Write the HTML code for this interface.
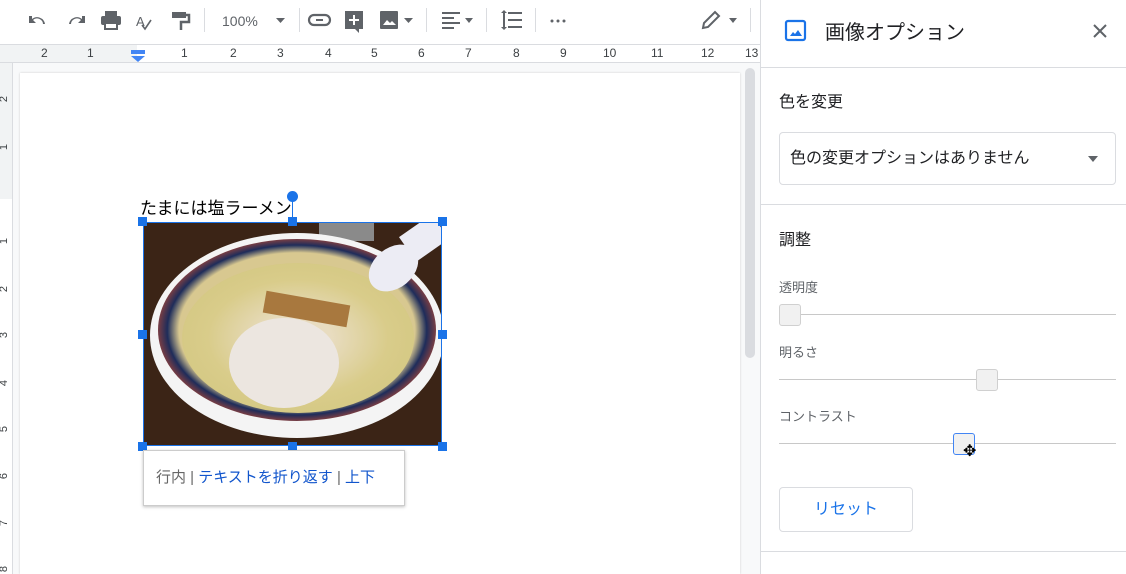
<!DOCTYPE html>
<html><head><meta charset="utf-8"><style>
*{box-sizing:border-box;margin:0;padding:0}
body{width:1126px;height:574px;overflow:hidden;position:relative;background:#f8f9fa;font-family:"Liberation Sans","Noto Sans CJK JP",sans-serif;color:#202124}
.abs{position:absolute}
#tb{left:0;top:0;width:760px;height:45px;background:#fff;border-bottom:1px solid #dadce0}
.sep{position:absolute;top:8px;width:1px;height:24px;background:#dadce0}
#ruler{left:0;top:45px;width:760px;height:18px;background:#fff;border-bottom:1px solid #dadce0;font-size:12px;color:#3c4043}
#ruler span{position:absolute;top:1px}
#lr{left:0;top:63px;width:13px;height:511px;background:#fff;border-right:1px solid #dadce0;font-size:11px;color:#3c4043}
#lr span{position:absolute;left:1px;transform:rotate(-90deg)}
#page{left:20px;top:73px;width:720px;height:501px;background:#fff;box-shadow:0 0 2px #ccc}
#sb{left:745px;top:68px;width:10px;height:290px;background:#dadce0;border-radius:5px}
#panel{left:760px;top:0;width:366px;height:574px;background:#fff;border-left:1px solid #dadce0}
.div{position:absolute;left:0;width:366px;height:1px;background:#dadce0}
.track{position:absolute;left:18px;width:337px;height:1px;background:#c8c8c8}
.thumb{position:absolute;width:22px;height:22px;background:#f1f1f1;border:1px solid #d0d0d0;border-radius:3px}
.lbl{position:absolute;left:18px;font-size:13px;color:#5f6368}
.h{position:absolute;width:9px;height:9px;background:#1a73e8}
</style></head><body>
<div id="tb" class="abs">
<svg width="760" height="45" style="position:absolute;left:0;top:0" fill="#5f6368">
<path d="M32 16 l-3 0 0 7 7 0 -3-3 a6 6 0 0 1 10 4 l2 0 a8 8 0 0 0 -13 -5z" />
<path d="M82 16 l3 0 0 7 -7 0 3-3 a6 6 0 0 0 -10 4 l-2 0 a8 8 0 0 1 13 -5z"/>
<rect x="101" y="16" width="20" height="9" rx="2"/><rect x="105" y="11" width="12" height="5"/><rect x="105" y="23" width="12" height="6" fill="#fff" stroke="#5f6368" stroke-width="2"/>
<text x="136" y="26" font-size="13" font-family="Liberation Sans">A</text><path d="M142 25 l3 4 6 -9" stroke="#5f6368" stroke-width="1.6" fill="none"/>
<rect x="172" y="12" width="14" height="6"/><path d="M186 15 h3 v7 h-8 v8" stroke="#5f6368" stroke-width="2.5" fill="none"/>
<text x="222" y="26" font-size="14" font-family="Liberation Sans">100%</text><path d="M276 18 l9 0 -4.5 5z"/>
<rect x="309" y="15" width="21" height="10" rx="5" fill="none" stroke="#5f6368" stroke-width="2.2"/><rect x="316" y="19" width="7" height="2" />
<path d="M345 11 h18 v18 h-4 v4 l-4 -4 h-10z"/><path d="M353 15 h2 v4 h4 v2 h-4 v4 h-2 v-4 h-4 v-2 h4z" fill="#fff"/>
<rect x="380" y="11" width="18" height="18" rx="1"/><path d="M383 25 l4-5 3 3 2-2 4 4z" fill="#fff"/><path d="M404 18 l9 0 -4.5 5z"/>
<rect x="442" y="12" width="18" height="2"/><rect x="442" y="17" width="12" height="2"/><rect x="442" y="22" width="18" height="2"/><rect x="442" y="27" width="12" height="2"/><path d="M465 18 l8 0 -4 5z"/>
<rect x="508" y="12" width="14" height="2"/><rect x="508" y="19" width="14" height="2"/><rect x="508" y="26" width="14" height="2"/><path d="M501 13 l3-3 3 3 h-2 v14 h2 l-3 3 -3-3 h2 v-14z"/>
<circle cx="552" cy="21" r="1.5"/><circle cx="558" cy="21" r="1.5"/><circle cx="564" cy="21" r="1.5"/>
<path d="M703 28 l1-5 11-11 4 4 -11 11z" fill="none" stroke="#5f6368" stroke-width="2"/><path d="M729 18 l8 0 -4 5z"/>
</svg>
<div class="sep" style="left:204px"></div><div class="sep" style="left:299px"></div><div class="sep" style="left:426px"></div><div class="sep" style="left:486px"></div><div class="sep" style="left:535px"></div><div class="sep" style="left:750px"></div>
</div>
<div id="ruler" class="abs">
<div class="abs" style="left:0;top:0;width:137px;height:17px;background:#f1f3f4"></div>
<span style="left:41px">2</span><span style="left:87px">1</span><span style="left:181px">1</span><span style="left:230px">2</span><span style="left:277px">3</span><span style="left:325px">4</span><span style="left:371px">5</span><span style="left:418px">6</span><span style="left:465px">7</span><span style="left:513px">8</span><span style="left:560px">9</span><span style="left:603px">10</span><span style="left:651px">11</span><span style="left:701px">12</span><span style="left:745px">13</span>
<svg class="abs" style="left:129px;top:5px" width="18" height="12"><rect x="2" y="0" width="14" height="4" fill="#4285f4"/><path d="M2 6 h14 l-7 6z" fill="#4285f4"/></svg>
</div>
<div id="lr" class="abs">
<div class="abs" style="left:0;top:0;width:12px;height:136px;background:#f1f3f4"></div>
<span style="top:30px">2</span><span style="top:78px">1</span><span style="top:172px">1</span><span style="top:220px">2</span><span style="top:266px">3</span><span style="top:314px">4</span><span style="top:360px">5</span><span style="top:407px">6</span><span style="top:454px">7</span><span style="top:500px">8</span>
</div>
<div id="page" class="abs"></div>
<div id="sb" class="abs"></div>
<div class="abs" style="left:140px;top:194px;font-size:17px;color:#000">たまには塩ラーメン</div>
<div class="abs" style="left:143px;top:222px;width:299px;height:224px;background:#3b2416;overflow:hidden;border:1px solid #1a73e8">
<div class="abs" style="left:175px;top:0;width:55px;height:18px;background:#8a8a8a"></div>
<div class="abs" style="left:6px;top:10px;width:294px;height:205px;border-radius:50%;background:#f4f4f4"></div>
<div class="abs" style="left:14px;top:16px;width:278px;height:182px;border-radius:50%;background:radial-gradient(ellipse,#d8c890 60%,#1e2c5a 66%,#b84a34 74%,#1e2c5a 84%)"></div>
<div class="abs" style="left:38px;top:40px;width:232px;height:150px;border-radius:50%;background:radial-gradient(ellipse,#e8dcc0 20%,#d9cc8a 55%,#cfc47c 100%)"></div>
<div class="abs" style="left:85px;top:95px;width:110px;height:90px;border-radius:50%;background:#ece6e0"></div>
<div class="abs" style="left:120px;top:75px;width:85px;height:22px;background:#a8783e;transform:rotate(10deg)"></div>
<div class="abs" style="left:222px;top:25px;width:55px;height:40px;border-radius:50%;background:#ececf4;transform:rotate(-40deg)"></div>
<div class="abs" style="left:260px;top:0;width:40px;height:30px;background:#ececf4;transform:rotate(-35deg)"></div>
</div>
<div class="h" style="left:138px;top:217px"></div><div class="h" style="left:288px;top:217px"></div><div class="h" style="left:438px;top:217px"></div>
<div class="h" style="left:138px;top:330px"></div><div class="h" style="left:438px;top:330px"></div>
<div class="h" style="left:138px;top:442px"></div><div class="h" style="left:288px;top:442px"></div><div class="h" style="left:438px;top:442px"></div>
<div class="abs" style="left:287px;top:191px;width:11px;height:11px;border-radius:50%;background:#1a73e8"></div>
<div class="abs" style="left:292px;top:200px;width:1px;height:17px;background:#1a73e8"></div>
<div class="abs" style="left:143px;top:450px;width:262px;height:56px;background:#fff;border:1px solid #ccc;box-shadow:0 1px 3px rgba(0,0,0,.25);font-size:15px;line-height:54px;padding-left:12px;color:#1155cc"><span style="color:#666">行内 | </span>テキストを折り返す<span style="color:#666"> | </span>上下</div>
<div id="panel" class="abs">
<svg class="abs" style="left:23px;top:19px" width="24" height="24"><rect x="2" y="2" width="19" height="19" rx="2" fill="none" stroke="#1a73e8" stroke-width="2.2"/><path d="M6 17 l3-4 2 2 3-4 4 6z" fill="#1a73e8"/></svg>
<div class="abs" style="left:64px;top:16px;font-size:20px">画像オプション</div>
<svg class="abs" style="left:331px;top:23px" width="16" height="16"><path d="M2 2 L14 14 M14 2 L2 14" stroke="#5f6368" stroke-width="2"/></svg>
<div class="div" style="top:67px"></div>
<div class="abs" style="left:18px;top:88px;font-size:16px">色を変更</div>
<div class="abs" style="left:18px;top:132px;width:337px;height:53px;border:1px solid #dadce0;border-radius:4px;font-size:16px;line-height:51px;padding-left:10px">色の変更オプションはありません
<svg class="abs" style="left:307px;top:22px" width="12" height="8"><path d="M1 1h10l-5 6z" fill="#5f6368"/></svg></div>
<div class="div" style="top:204px"></div>
<div class="abs" style="left:18px;top:226px;font-size:16px">調整</div>
<div class="lbl" style="top:277px">透明度</div>
<div class="track" style="top:314px"></div><div class="thumb" style="left:18px;top:304px"></div>
<div class="lbl" style="top:342px">明るさ</div>
<div class="track" style="top:379px"></div><div class="thumb" style="left:215px;top:369px"></div>
<div class="lbl" style="top:406px">コントラスト</div>
<div class="track" style="top:443px"></div><div class="thumb" style="left:192px;top:433px;border-color:#4285f4"></div>
<div class="abs" style="left:202px;top:441px;font-size:16px;color:#000">✥</div>
<div class="abs" style="left:18px;top:487px;width:134px;height:45px;border:1px solid #dadce0;border-radius:4px;color:#1a73e8;font-size:16px;text-align:center;line-height:43px">リセット</div>
<div class="div" style="top:551px"></div>
</div>
</body></html>
